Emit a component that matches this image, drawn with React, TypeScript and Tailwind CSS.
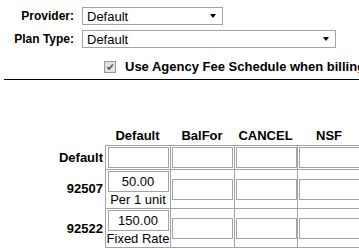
import { ReactNode } from 'react';

const fields = [
  { label: 'Provider:', width: 'w-[141px]', value: 'Default' },
  { label: 'Plan Type:', width: 'w-[254px]', value: 'Default' },
];

const columns = [
  { name: 'Default', width: 'w-[65px]' },
  { name: 'BalFor', width: 'w-[64px]' },
  { name: 'CANCEL', width: 'w-[63px]' },
  { name: 'NSF', width: 'w-[64px]' },
];

const rows = [
  { code: 'Default', value: '', note: '', height: 'h-[24px]' },
  { code: '92507', value: '50.00', note: 'Per 1 unit', height: 'h-[39px]' },
  { code: '92522', value: '150.00', note: 'Fixed Rate', height: 'h-[39px]' },
];

function SelectBox({ width, value }: { width: string; value: string }) {
  return (
    <div
      className={`${width} h-[18px] border border-[#a3a3a3] bg-white flex items-center justify-between pl-[4px] pr-[6px] text-[13px] leading-[15px]`}
    >
      <span>{value}</span>
      <svg width="6" height="4" viewBox="0 0 6 4">
        <path d="M0 0 L6 0 L3 4 Z" fill="#000" />
      </svg>
    </div>
  );
}

function FeeInput({ value }: { value: string }) {
  return (
    <div className="w-[61px] h-[21px] border border-[#a3a3a3] bg-white flex items-center justify-center text-[13px] leading-[15px]">
      {value}
    </div>
  );
}

function Cell({ width, children, last, bottom }: { width: string; children: ReactNode; last: boolean; bottom: boolean }) {
  return (
    <div
      className={`${width} h-full shrink-0 border-l border-t border-[#a3a3a3] flex flex-col items-center justify-center ${last ? 'border-r' : ''} ${bottom ? 'border-b' : ''}`}
    >
      {children}
    </div>
  );
}

export default function App() {
  return (
    <div className="w-[359px] h-[249px] overflow-hidden bg-white text-black font-['Liberation_Sans',Arial,sans-serif]">
      <div className="pt-[7px]">
        {/* provider / plan selectors */}
        <div className="grid grid-cols-[76px_auto] gap-x-[6px] gap-y-[5px] justify-start">
          {fields.map((f) => (
            <div key={f.label} className="contents">
              <div className="text-right pr-[2px] text-[12px] font-bold leading-[18px]">{f.label}</div>
              <SelectBox width={f.width} value={f.value} />
            </div>
          ))}
        </div>

        <div className="mt-[11px] h-[15px] ml-[104px] flex items-center gap-[9px] whitespace-nowrap">
          <span className="w-[12px] h-[12px] border border-[#9a9a9a] bg-[#e3e3e3] flex items-center justify-center shrink-0">
            <svg width="8" height="8" viewBox="0 0 10 10">
              <path d="M1.5 5 L4 7.5 L8.5 2" stroke="#555" strokeWidth="2" fill="none" />
            </svg>
          </span>
          <span className="text-[13px] font-bold leading-[15px]">Use Agency Fee Schedule when billing</span>
        </div>

        <div className="mt-[5px] ml-[4px] w-[400px] h-px bg-black" />

        {/* fee schedule grid */}
        <div className="mt-[48px] w-[420px]">
          <div className="flex h-[17px]">
            <div className="w-[105px] shrink-0" />
            {columns.map((c) => (
              <div key={c.name} className={`${c.width} shrink-0 text-center text-[13px] font-bold leading-[15px]`}>
                {c.name}
              </div>
            ))}
          </div>
          {rows.map((r, ri) => (
            <div key={r.code} className={`flex ${r.height} ${ri === rows.length - 1 ? 'h-[40px]' : ''}`}>
              <div className="w-[105px] shrink-0 flex items-center justify-end pr-[2px] text-[13px] font-bold leading-[15px]">
                {r.code}
              </div>
              {columns.map((c, ci) => (
                <Cell key={c.name} width={c.width} last={ci === columns.length - 1} bottom={ri === rows.length - 1}>
                  <FeeInput value={ci === 0 ? r.value : ''} />
                  {ci === 0 && r.note && <div className="text-[13px] leading-[15px]">{r.note}</div>}
                </Cell>
              ))}
            </div>
          ))}
        </div>
      </div>
    </div>
  );
}
